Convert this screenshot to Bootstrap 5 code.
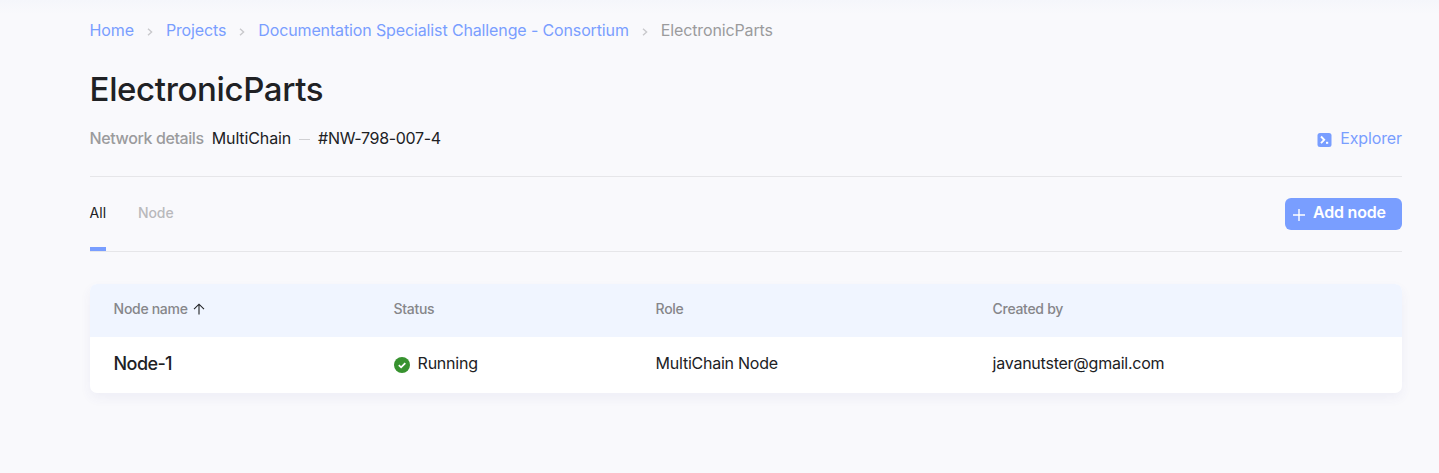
<!DOCTYPE html>
<html lang="en">
<head>
<meta charset="utf-8">
<meta name="viewport" content="width=device-width, initial-scale=1">
<title>ElectronicParts</title>
<link href="https://cdn.jsdelivr.net/npm/bootstrap@5.3.0/dist/css/bootstrap.min.css" rel="stylesheet">
<style>
  body { font-family: Inter, "Liberation Sans", sans-serif; font-size: 16px; letter-spacing: -.24px; line-height: 24px; color: #202124; background: #f9f9fc; min-height: 100vh; overflow: hidden; }
  .top-shade { height: 14px; margin-bottom: 4px; background: linear-gradient(#f5f6fb, #f9f9fc); }
  .page { padding: 0 37px 0 89.6px; }
  a { color: #799eff; text-decoration: none; }
  .crumbs { height: 24px; letter-spacing: -.13px; }
  .crumbs svg { margin: 3px 13px 0; }
  .muted { color: #9b9b9d; }
  h1 { font-size: 33px; font-weight: 500; line-height: 40px; letter-spacing: -.36px; margin: 27px 0 0; }
  .details { height: 68px; padding-top: 17px; border-bottom: 1px solid #e6e6e9; }
  .details, .tabs { letter-spacing: -.12px; }
  .label-strong { font-weight: 500; letter-spacing: -.4px; }
  .netid { letter-spacing: -.32px; }
  .dash { width: 11px; height: 1px; background: #d0d0d3; margin: 3px 8px 0; }
  .tabs { height: 75px; border-bottom: 1px solid #e6e6e9; font-size: 14px; }
  .tab-item { padding-top: 24px; height: 74px; border-bottom: 4px solid transparent; color: #b9b9bc; font-weight: 500; }
  .tab-item.active { color: #202124; border-color: #799eff; font-weight: 400; letter-spacing: 0; }
  .btn-add { width: 117px; height: 32px; margin-top: 21px; padding: 0 0 5px 8px; border-radius: 6px; background: #799eff; color: #fff; font-weight: 600; letter-spacing: -.2px; line-height: 24px; }
  .btn-add:hover { background: #6b92f7; color: #fff; }
  .btn-add svg { margin-top: 6px; }
  .nodes { margin-top: 32px; border-radius: 7px; background: #fff; overflow: hidden; box-shadow: 0 5px 12px rgba(60, 75, 150, .06); }
  .node-row { display: grid; grid-template-columns: 280px 262px 337px 1fr; padding: 0 24px 3px; height: 56px; align-items: center; }
  .node-head { height: 53px; background: #f0f5ff; font-size: 14px; font-weight: 500; letter-spacing: -.3px; color: #86868a; }
  .node-title { font-size: 18px; font-weight: 500; letter-spacing: -.6px; }
  .node-cell { padding-bottom: 2px; }
</style>
</head>
<body>
<div class="top-shade"></div>
<main class="page">
  <nav class="crumbs d-flex align-items-center" aria-label="breadcrumb">
    <a href="#">Home</a>
    <svg width="6" height="8" viewBox="0 0 6 8" fill="none" stroke="#c9c9cc" stroke-width="1.4"><path d="M1 .7 4.6 4 1 7.3"/></svg>
    <a href="#">Projects</a>
    <svg width="6" height="8" viewBox="0 0 6 8" fill="none" stroke="#c9c9cc" stroke-width="1.4"><path d="M1 .7 4.6 4 1 7.3"/></svg>
    <a href="#">Documentation Specialist Challenge - Consortium</a>
    <svg width="6" height="8" viewBox="0 0 6 8" fill="none" stroke="#c9c9cc" stroke-width="1.4"><path d="M1 .7 4.6 4 1 7.3"/></svg>
    <span class="muted">ElectronicParts</span>
  </nav>
  <h1>ElectronicParts</h1>
  <section class="details d-flex justify-content-between align-items-start">
    <div class="d-flex align-items-center">
      <span class="muted label-strong me-2">Network details</span>
      <span>MultiChain</span><span class="dash"></span><span class="netid">#NW-798-007-4</span>
    </div>
    <a href="#" class="d-flex align-items-center">
      <svg class="me-2 mt-1" width="15" height="14" viewBox="0 0 15 14"><rect x=".5" width="14" height="14" rx="2.5" fill="#799eff"/><path d="m4 3.5 3.2 3.3L4 10.1" fill="none" stroke="#fff" stroke-width="1.9"/><rect x="9" y="8.8" width="2.2" height="2" fill="#fff"/></svg>
      <span>Explorer</span>
    </a>
  </section>
  <section class="tabs d-flex justify-content-between">
    <div class="d-flex">
      <div class="tab-item active">All</div>
      <div class="tab-item ms-4 ps-2">Node</div>
    </div>
    <button type="button" class="btn btn-add border-0 d-flex align-items-center">
      <svg class="me-2" width="12" height="12" viewBox="0 0 12 12" stroke="#fff" stroke-width="1.4"><path d="M6 0v12M0 6h12"/></svg>
      <span>Add node</span>
    </button>
  </section>
  <section class="nodes">
    <div class="node-row node-head">
      <div class="d-flex align-items-center"><span>Node name</span>
        <svg class="ms-1" width="14" height="12" viewBox="0 0 14 12" fill="none" stroke="#202124" stroke-width="1.1"><path d="M7 11.5V1.2M2 6.2l5-5 5 5"/></svg>
      </div>
      <div>Status</div><div>Role</div><div>Created by</div>
    </div>
    <div class="node-row">
      <div class="node-title">Node-1</div>
      <div class="node-cell d-flex align-items-center">
        <svg class="me-2 mt-1" width="16" height="16" viewBox="0 0 16 16"><circle cx="8" cy="8" r="8" fill="#37922f"/><path d="m4.8 8.2 2.3 2.1 4.2-4.2" fill="none" stroke="#fff" stroke-width="1.8"/></svg>
        <span>Running</span>
      </div>
      <div class="node-cell">MultiChain Node</div>
      <div class="node-cell">javanutster@gmail.com</div>
    </div>
  </section>
</main>
<script src="https://cdn.jsdelivr.net/npm/bootstrap@5.3.0/dist/js/bootstrap.bundle.min.js"></script>
</body>
</html>
